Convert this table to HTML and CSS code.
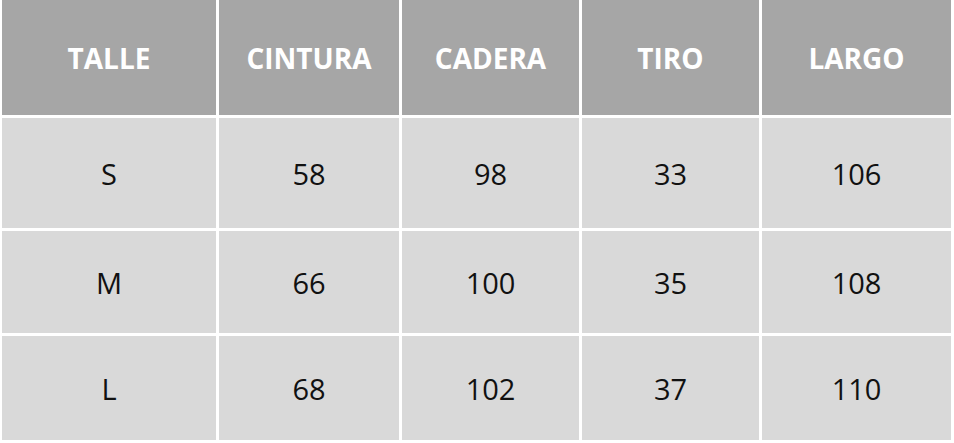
FILE: index.html
```html
<!DOCTYPE html>
<html lang="es">
<head>
<meta charset="utf-8">
<title>Tabla de talles</title>
<link rel="stylesheet" href="styles.css">
</head>
<body>
<div class="size-table" role="table">
  <div class="cell head" role="columnheader">TALLE</div>
  <div class="cell head" role="columnheader">CINTURA</div>
  <div class="cell head" role="columnheader">CADERA</div>
  <div class="cell head" role="columnheader">TIRO</div>
  <div class="cell head" role="columnheader">LARGO</div>

  <div class="cell" role="cell">S</div>
  <div class="cell" role="cell">58</div>
  <div class="cell" role="cell">98</div>
  <div class="cell" role="cell">33</div>
  <div class="cell" role="cell">106</div>

  <div class="cell" role="cell">M</div>
  <div class="cell" role="cell">66</div>
  <div class="cell" role="cell">100</div>
  <div class="cell" role="cell">35</div>
  <div class="cell" role="cell">108</div>

  <div class="cell" role="cell">L</div>
  <div class="cell" role="cell">68</div>
  <div class="cell" role="cell">102</div>
  <div class="cell" role="cell">37</div>
  <div class="cell" role="cell">110</div>
</div>
</body>
</html>
```

FILE: styles.css
```css
html, body {
  margin: 0;
  padding: 0;
  background: #ffffff;
}

body {
  font-family: "Open Sans", "Liberation Sans", sans-serif;
}

.size-table {
  display: grid;
  grid-template-columns: 214px 180px 177px 177px 189px;
  grid-template-rows: 115px 110px 102px 104px;
  gap: 3px;
  padding: 0 3px 3px 2px;
  width: 954px;
  height: 443px;
  box-sizing: border-box;
}

.cell {
  display: flex;
  align-items: center;
  justify-content: center;
  background: #d9d9d9;
  color: #111111;
  font-size: 29px;
  font-weight: 400;
}

.head {
  background: #a6a6a6;
  color: #ffffff;
  font-size: 28px;
  font-weight: 700;
  padding-top: 0;
}
```
